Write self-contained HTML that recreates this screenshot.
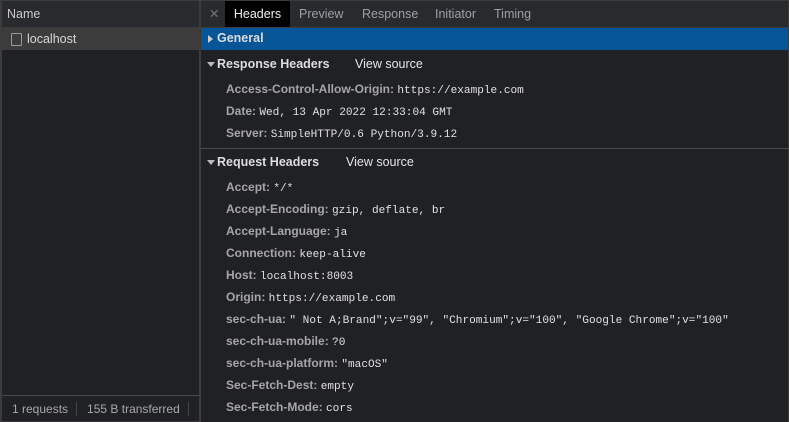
<!DOCTYPE html>
<html><head><style>
body{margin:0;width:789px;height:422px;background:#3c3c3c;font-family:"Liberation Sans",sans-serif;overflow:hidden;position:relative}
.l{position:absolute;left:2px;top:1px;width:197px;height:420px;background:#202124}
.lh{height:26px;background:#292a2d;border-bottom:1px solid #3d3d3d;color:#c8c8c8;font-size:12.5px;line-height:27px;padding-left:5px}
.sel{height:22px;background:#3c3c3c;color:#d8d8d8;font-size:12.5px;line-height:22px;padding-left:25px;position:relative}
.sel:before{content:"";position:absolute;left:9px;top:5px;width:9px;height:11px;border:1px solid #9a9a9a;border-radius:1px}
.ft{position:absolute;left:0;bottom:0;width:197px;height:25px;border-top:1px solid #4a4a4a;background:#202124;color:#a8a8a8;font-size:12px;line-height:26px}
.ft span{padding:0 8px 0 10px;border-right:1px solid #444}
.r{position:absolute;left:201px;top:1px;width:587px;height:421px;background:#202124}
.tb{height:26px;background:#292a2d;border-bottom:1px solid #3d3d3d;font-size:12.5px;color:#9aa0a6;position:relative}
.tb span{position:absolute;top:0;line-height:26px}
.gen{position:absolute;top:27px;left:0;width:587px;height:22px;background:#075599;color:#ddd;font-weight:bold;font-size:12.5px;line-height:21px;padding-left:16px;box-sizing:border-box}
.sec{position:absolute;left:16px;color:#ddd;font-weight:bold;font-size:12.5px}
.vs{position:absolute;color:#e6e6e6;font-size:12.5px}
.tri{position:absolute;left:6px;width:0;height:0;border-left:4px solid transparent;border-right:4px solid transparent;border-top:5px solid #bbb}
.k{position:absolute;left:25px;font-size:12px;color:#a6a6a6;font-weight:bold;white-space:nowrap}
.k i{font-style:normal;font-weight:normal;font-family:"Liberation Mono",monospace;font-size:11.1px;color:#e0e0e0}
</style></head><body>
<div class="l">
<div class="lh">Name</div>
<div class="sel">localhost</div>
<div class="ft"><span>1 requests</span><span>155 B transferred</span></div>
</div>
<div class="r">
<div class="tb">
<span style="left:8px;color:#777">✕</span>
<span style="left:24px;width:65px;background:#000;color:#eee;text-align:center">Headers</span>
<span style="left:98px">Preview</span>
<span style="left:161px">Response</span>
<span style="left:234px">Initiator</span>
<span style="left:293px">Timing</span>
</div>
<div class="gen"><span style="position:absolute;left:7px;top:7px;border-top:4px solid transparent;border-bottom:4px solid transparent;border-left:5px solid #ccc"></span>General</div>
<div class="tri" style="top:61px"></div>
<div class="sec" style="top:56px">Response Headers</div>
<div class="vs" style="left:154px;top:56px">View source</div>
<div class="k" style="top:81px">Access-Control-Allow-Origin: <i>https://example.com</i></div>
<div class="k" style="top:103px">Date: <i>Wed, 13 Apr 2022 12:33:04 GMT</i></div>
<div class="k" style="top:125px">Server: <i>SimpleHTTP/0.6 Python/3.9.12</i></div>
<div style="position:absolute;top:147px;left:0;width:587px;height:1px;background:#4a4a4a"></div>
<div class="tri" style="top:159px"></div>
<div class="sec" style="top:154px">Request Headers</div>
<div class="vs" style="left:145px;top:154px">View source</div>
<div class="k" style="top:179px">Accept: <i>*/*</i></div>
<div class="k" style="top:201px">Accept-Encoding: <i>gzip, deflate, br</i></div>
<div class="k" style="top:223px">Accept-Language: <i>ja</i></div>
<div class="k" style="top:245px">Connection: <i>keep-alive</i></div>
<div class="k" style="top:267px">Host: <i>localhost:8003</i></div>
<div class="k" style="top:289px">Origin: <i>https://example.com</i></div>
<div class="k" style="top:311px">sec-ch-ua: <i>" Not A;Brand";v="99", "Chromium";v="100", "Google Chrome";v="100"</i></div>
<div class="k" style="top:333px">sec-ch-ua-mobile: <i>?0</i></div>
<div class="k" style="top:355px">sec-ch-ua-platform: <i>"macOS"</i></div>
<div class="k" style="top:377px">Sec-Fetch-Dest: <i>empty</i></div>
<div class="k" style="top:399px">Sec-Fetch-Mode: <i>cors</i></div>
</div>
</body></html>
